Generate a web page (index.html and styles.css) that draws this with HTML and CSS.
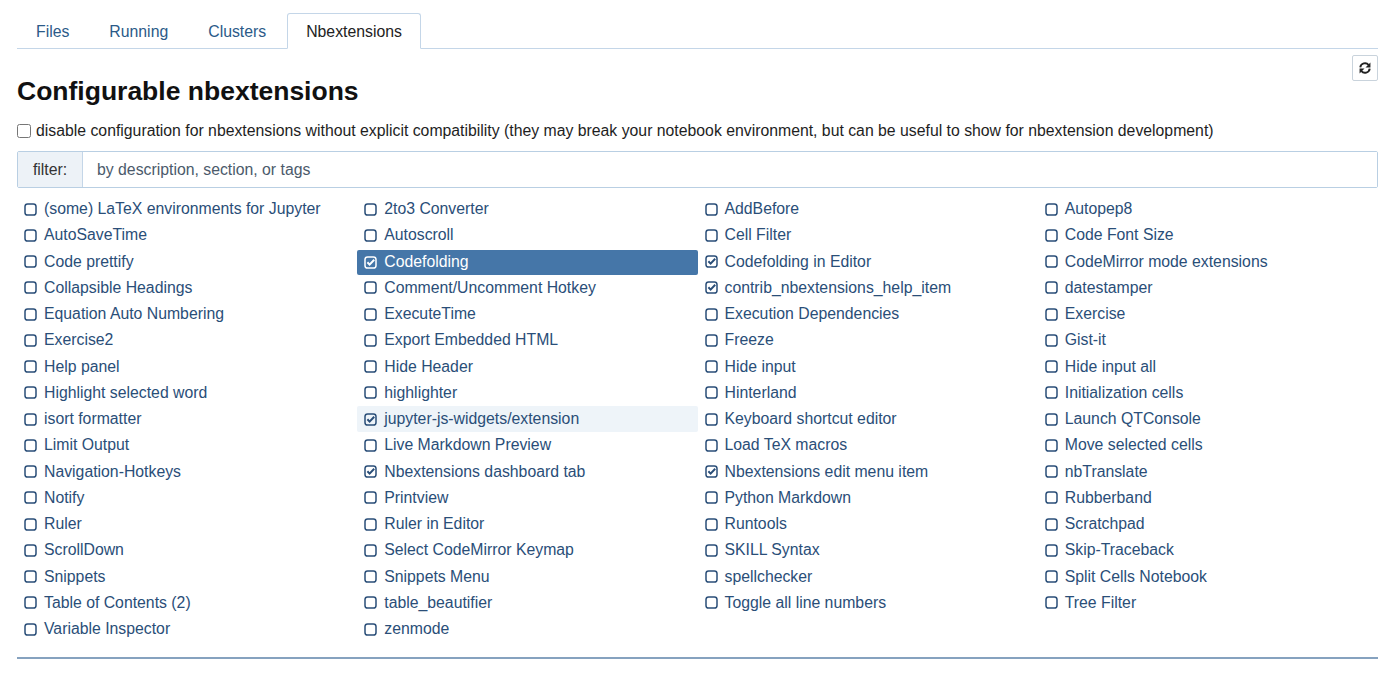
FILE: index.html
```html
<!DOCTYPE html>
<html>
<head>
<meta charset="utf-8">
<link rel="stylesheet" href="styles.css">
</head>
<body>
<div class="page">
  <ul class="tabs">
    <li class="tab"><a>Files</a></li>
    <li class="tab"><a>Running</a></li>
    <li class="tab"><a>Clusters</a></li>
    <li class="tab active"><a>Nbextensions</a></li>
  </ul>
  <div class="header">
    <h1 class="title">Configurable nbextensions</h1>
    <button class="refresh" title="refresh">
      <svg width="14" height="14" viewBox="0 0 16 16"><path d="M2.6 7.2 A5.4 5.4 0 0 1 12.2 4.6" fill="none" stroke="#222" stroke-width="2.2"/><path d="M14.2 1.6 L14.2 7.4 L8.6 7.4 Z" fill="#222"/><path d="M13.4 8.8 A5.4 5.4 0 0 1 3.8 11.4" fill="none" stroke="#222" stroke-width="2.2"/><path d="M1.8 14.4 L1.8 8.6 L7.4 8.6 Z" fill="#222"/></svg>
    </button>
  </div>
  <label class="compat"><input type="checkbox" class="compat-box"> disable configuration for nbextensions without explicit compatibility (they may break your notebook environment, but can be useful to show for nbextension development)</label>
  <div class="filter">
    <span class="filter-label">filter:</span>
    <input class="filter-input" type="text" placeholder="by description, section, or tags">
  </div>
  <ul class="exts" id="exts"></ul>
  <hr class="bottom-rule">
</div>
<script src="app.js"></script>
</body>
</html>
```
FILE: styles.css
```css
* { box-sizing: border-box; }
body {
  margin: 0;
  background: #fff;
  font-family: "Liberation Sans", Arial, Helvetica, sans-serif;
  font-size: 15.8px;
  color: #222;
}
.page { padding: 0 22px 0 17px; }
.tabs {
  list-style: none;
  margin: 0;
  padding: 13px 0 0 0;
  display: flex;
  border-bottom: 1px solid #c4d6e8;
}
.tab { margin-right: 2px; margin-bottom: -1px; }
.tab a {
  display: block;
  padding: 9px 18px 8px 18px;
  line-height: 17px;
  color: #2b5a88;
  border: 1px solid transparent;
  border-radius: 3px 3px 0 0;
}
.tab:first-child a { padding-left: 18px; }
.tab.active a {
  color: #222;
  background: #fff;
  border-color: #c4d6e8;
  border-bottom-color: #fff;
}
.header {
  display: flex;
  justify-content: space-between;
  align-items: flex-start;
  margin-top: 6px;
}
.title {
  margin: 20px 0 0 0;
  font-size: 26.5px;
  line-height: 32px;
  font-weight: bold;
  color: #111;
}
.refresh {
  width: 26px;
  height: 26px;
  padding: 0;
  border: 1px solid #c9d3dc;
  border-radius: 2px;
  background: #fff;
  display: flex;
  align-items: center;
  justify-content: center;
}
.compat {
  display: flex;
  align-items: center;
  margin-top: 14px;
  line-height: 20px;
  color: #1e1e1e;
}
.compat-box { margin: 0 5px 0 0; width: 14px; height: 14px; }
.filter {
  display: flex;
  margin-top: 10px;
  height: 37px;
  border: 1px solid #b9cfe3;
  border-radius: 2px;
}
.filter-label {
  width: 65px;
  background: #edf2f7;
  border-right: 1px solid #c4d6e8;
  display: flex;
  align-items: center;
  justify-content: center;
  color: #333;
}
.filter-input {
  flex: 1;
  border: 0;
  outline: none;
  padding: 0 14px;
  font: inherit;
  color: #333;
}
.filter-input::placeholder { color: #4b5a6b; }
.exts {
  list-style: none;
  margin: 8px 0 0 0;
  padding: 0;
  display: grid;
  grid-template-columns: repeat(4, 1fr);
  grid-auto-rows: 26.25px;
}
.ext {
  display: flex;
  align-items: center;
  padding: 0 0 0 7px;
  color: #2a4e78;
  border-radius: 2px;
  white-space: nowrap;
}
.ext svg { flex: none; margin-right: 7px; }
.ext.selected { background: #4576a8; color: #fff; margin: 1px 0 0 0; }
.ext.hover { background: #eef4f9; }
.bottom-rule {
  margin: 15px 0 0 0;
  border: 0;
  height: 2px;
  background: #86a2bf;
}
```
FILE: app.js
```js
var items = [
  ["(some) LaTeX environments for Jupyter"],["2to3 Converter"],["AddBefore"],["Autopep8"],
  ["AutoSaveTime"],["Autoscroll"],["Cell Filter"],["Code Font Size"],
  ["Code prettify"],["Codefolding","c","selected"],["Codefolding in Editor","c"],["CodeMirror mode extensions"],
  ["Collapsible Headings"],["Comment/Uncomment Hotkey"],["contrib_nbextensions_help_item","c"],["datestamper"],
  ["Equation Auto Numbering"],["ExecuteTime"],["Execution Dependencies"],["Exercise"],
  ["Exercise2"],["Export Embedded HTML"],["Freeze"],["Gist-it"],
  ["Help panel"],["Hide Header"],["Hide input"],["Hide input all"],
  ["Highlight selected word"],["highlighter"],["Hinterland"],["Initialization cells"],
  ["isort formatter"],["jupyter-js-widgets/extension","c","hover"],["Keyboard shortcut editor"],["Launch QTConsole"],
  ["Limit Output"],["Live Markdown Preview"],["Load TeX macros"],["Move selected cells"],
  ["Navigation-Hotkeys"],["Nbextensions dashboard tab","c"],["Nbextensions edit menu item","c"],["nbTranslate"],
  ["Notify"],["Printview"],["Python Markdown"],["Rubberband"],
  ["Ruler"],["Ruler in Editor"],["Runtools"],["Scratchpad"],
  ["ScrollDown"],["Select CodeMirror Keymap"],["SKILL Syntax"],["Skip-Traceback"],
  ["Snippets"],["Snippets Menu"],["spellchecker"],["Split Cells Notebook"],
  ["Table of Contents (2)"],["table_beautifier"],["Toggle all line numbers"],["Tree Filter"],
  ["Variable Inspector"],["zenmode"]
];
var ul = document.getElementById('exts');
items.forEach(function (it) {
  var li = document.createElement('li');
  li.className = 'ext' + (it[2] ? ' ' + it[2] : '');
  var col = it[2] === 'selected' ? '#fff' : '#2a4e78';
  var svg = '<svg width="13" height="13" viewBox="0 0 13 13"><rect x="1" y="1" width="11" height="11" rx="2.6" fill="none" stroke="' + col + '" stroke-width="1.5"/>';
  if (it[1] === 'c') {
    svg += '<path d="M3.4 6.3 L5.6 8.6 L10.2 3.8" fill="none" stroke="' + col + '" stroke-width="2"/>';
  }
  svg += '</svg>';
  li.innerHTML = svg + '<span></span>';
  li.querySelector('span').textContent = it[0];
  ul.appendChild(li);
});
```
